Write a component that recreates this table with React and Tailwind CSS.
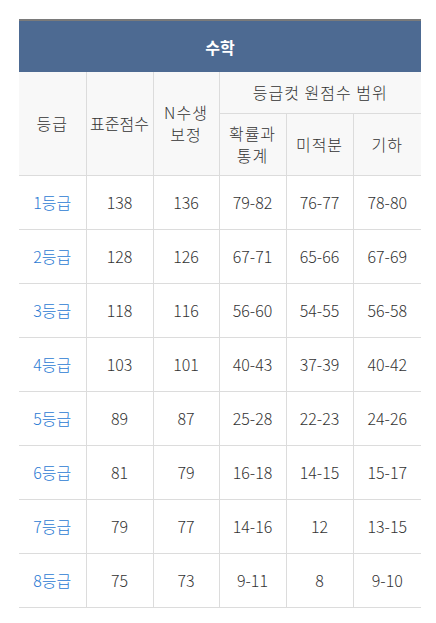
import React from 'react';

const ROWS = [
  ['1등급', '138', '136', '79-82', '76-77', '78-80'],
  ['2등급', '128', '126', '67-71', '65-66', '67-69'],
  ['3등급', '118', '116', '56-60', '54-55', '56-58'],
  ['4등급', '103', '101', '40-43', '37-39', '40-42'],
  ['5등급', '89', '87', '25-28', '22-23', '24-26'],
  ['6등급', '81', '79', '16-18', '14-15', '15-17'],
  ['7등급', '79', '77', '14-16', '12', '13-15'],
  ['8등급', '75', '73', '9-11', '8', '9-10'],
];

const FONT = { fontFamily: '"Noto Sans CJK KR", "Noto Sans", sans-serif' };

export default function App() {
  return (
    <div className="bg-white w-[436px] h-[623px] pt-[19px] pl-[19px]" style={FONT}>
      <table className="w-[402px] border-collapse table-fixed text-[16px] font-light text-[#333] text-center">
        <colgroup>
          <col className="w-[67px]" />
          <col className="w-[67px]" />
          <col className="w-[66px]" />
          <col className="w-[67px]" />
          <col className="w-[67px]" />
          <col className="w-[68px]" />
        </colgroup>
        <thead>
          <tr>
            <th colSpan={6} className="h-[52px] bg-[#4d6a92] border-t-2 border-[#7a7a7a] text-white font-bold p-0">
              수학
            </th>
          </tr>
          <tr className="bg-[#f8f8f8] tracking-[1px]">
            <th rowSpan={2} className="font-light border-r border-b border-[#dcdcdc] p-0">등급</th>
            <th rowSpan={2} className="font-light border-r border-b border-[#dcdcdc] p-0 tracking-normal">표준점수</th>
            <th rowSpan={2} className="font-light border-r border-b border-[#dcdcdc] p-0 leading-[22px]">N수생<br />보정</th>
            <th colSpan={3} className="h-[41px] font-light border-b border-[#dcdcdc] p-0">등급컷 원점수 범위</th>
          </tr>
          <tr className="bg-[#f8f8f8] tracking-[1px]">
            <th className="h-[62px] font-light border-r border-b border-[#dcdcdc] p-0 leading-[22px]">확률과<br />통계</th>
            <th className="font-light border-r border-b border-[#dcdcdc] p-0">미적분</th>
            <th className="font-light border-b border-[#dcdcdc] p-0">기하</th>
          </tr>
        </thead>
        <tbody>
          {ROWS.map((r) => (
            <tr key={r[0]} className="h-[54px]">
              {r.map((c, i) => (
                <td
                  key={i}
                  className={`p-0 border-b border-[#dcdcdc] ${i < 5 ? 'border-r' : ''} ${i === 0 ? 'text-[#2b7ad3]' : ''}`}
                >
                  {c}
                </td>
              ))}
            </tr>
          ))}
        </tbody>
      </table>
    </div>
  );
}
